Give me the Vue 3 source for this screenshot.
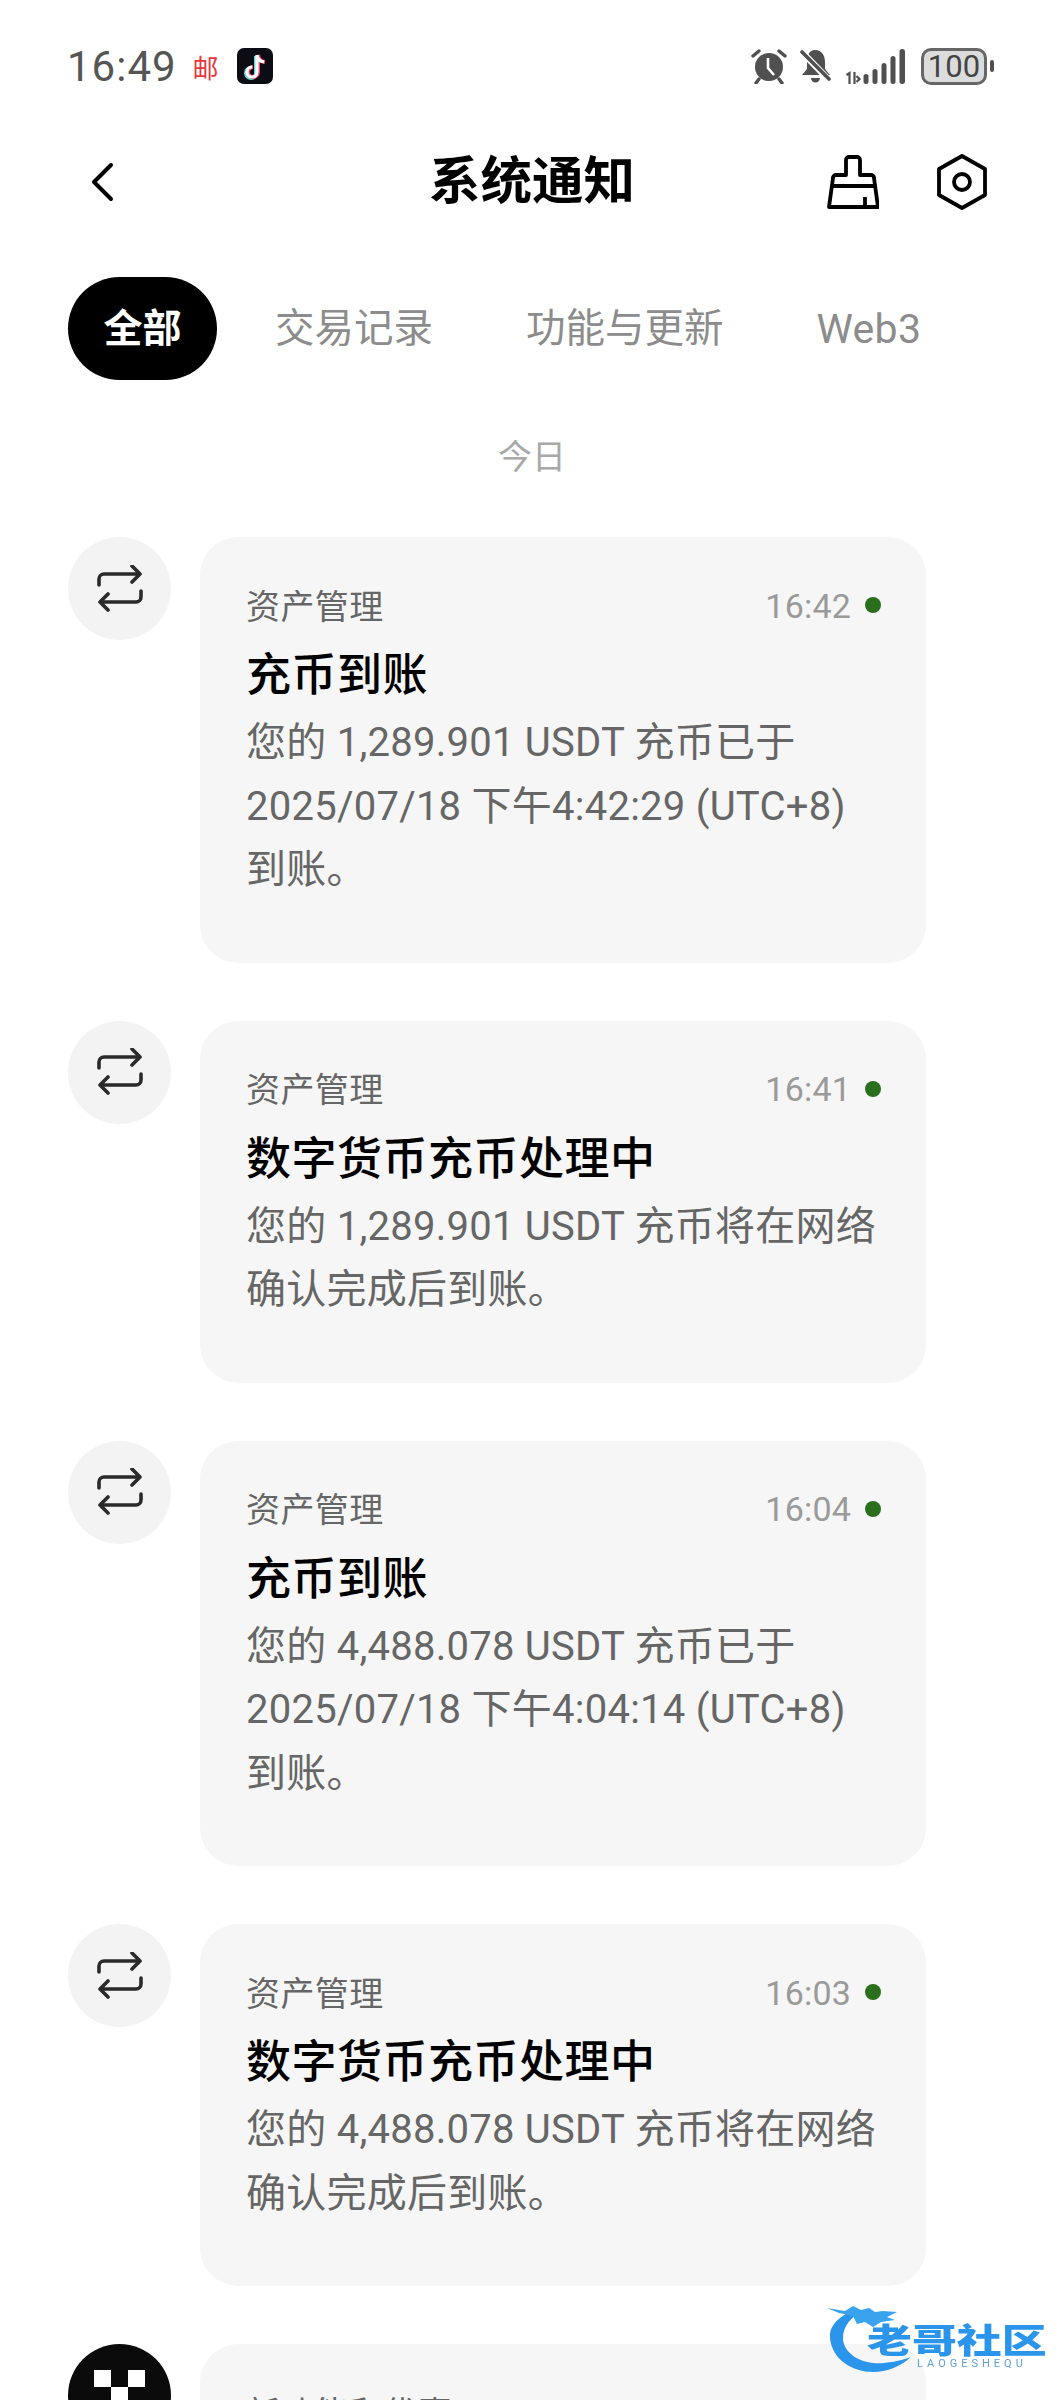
<template>
  <div class="screen">
    <!-- status bar -->
    <div class="status">
      <div class="status-left">
        <span class="clock">16:49</span>
        <span class="mail">邮</span>
        <svg class="tiktok" viewBox="0 0 36 36">
          <rect width="36" height="36" rx="7" fill="#0c0c14" />
          <path d="M20 7v17a5 5 0 1 1-5-5" fill="none" stroke="#5fd8dc" stroke-width="4" transform="translate(-1 1)" />
          <path d="M20 7v17a5 5 0 1 1-5-5M20 7c.5 4 3 6.500 7 7" fill="none" stroke="#f2456a" stroke-width="4" transform="translate(1 0)" />
          <path d="M20 7v17a5 5 0 1 1-5-5M20 7c.5 4 3 6.500 7 7" fill="none" stroke="#fff" stroke-width="3.200" />
        </svg>
      </div>
      <div class="status-right">
        <svg class="st-icon" viewBox="0 0 36 36">
          <circle cx="18" cy="19" r="14" fill="#505050" />
          <path d="M17 10v10l6 7" fill="none" stroke="#fff" stroke-width="2.600" />
          <path d="M2 8l6-5M34 8l-6-5M8 31l-3 4M28 31l3 4" stroke="#505050" stroke-width="3.400" stroke-linecap="round" />
        </svg>
        <svg class="st-icon bell" viewBox="0 0 32 36">
          <path d="M15 2c7 0 10 6 10 12v7l5 6H2l5-6v-7c0-6 2-12 8-12zM11 30h9a4.500 4.500 0 0 1-9 0z" fill="#505050" />
          <path d="M1 3l29 30" stroke="#fff" stroke-width="6.500" />
          <path d="M2 4l27 27" stroke="#505050" stroke-width="3.600" stroke-linecap="round" />
        </svg>
        <svg class="signal" viewBox="0 0 62 36">
          <path d="M2 27l3-2v11M10 24v12M12 28l3 3-3 3" fill="none" stroke="#505050" stroke-width="2.200" />
          <rect x="19" y="26" width="5" height="10" rx="2.500" fill="#505050" />
          <rect x="28" y="21" width="5" height="15" rx="2.500" fill="#505050" />
          <rect x="37" y="15" width="5" height="21" rx="2.500" fill="#505050" />
          <rect x="46" y="8" width="5" height="28" rx="2.500" fill="#505050" />
          <rect x="55" y="1" width="5.500" height="35" rx="2.700" fill="#505050" />
        </svg>
        <div class="battery"><span>100</span></div>
        <i class="battery-cap"></i>
      </div>
    </div>

    <!-- header -->
    <div class="topbar">
      <svg class="back" viewBox="0 0 24 40">
        <path d="M21 3L4 20l17 17" fill="none" stroke="#000" stroke-width="4" stroke-linecap="round" stroke-linejoin="round" />
      </svg>
      <h1>系统通知</h1>
      <svg class="broom" viewBox="0 0 52 54">
        <path d="M19 20V5a3 3 0 0 1 3-3h8a3 3 0 0 1 3 3v15h11a3 3 0 0 1 3 3l4 29H2l4-29a3 3 0 0 1 3-3z" fill="none" stroke="#000" stroke-width="3.800" stroke-linejoin="round" />
        <path d="M5 31h42M38 42v9" fill="none" stroke="#000" stroke-width="3.800" />
      </svg>
      <svg class="hex" viewBox="0 0 52 56">
        <path d="M26 2l23 13v26L26 54 3 41V15z" fill="none" stroke="#000" stroke-width="3.800" stroke-linejoin="round" />
        <circle cx="26" cy="28" r="8" fill="none" stroke="#000" stroke-width="3.800" />
      </svg>
    </div>

    <!-- tabs -->
    <div class="tabs">
      <span v-for="(t, i) in tabs" :key="t" class="tab" :class="{ on: i === 0 }">{{ t }}</span>
    </div>

    <div class="day">今日</div>

    <div class="list">
      <div v-for="n in notices" :key="n.time" class="row">
        <div class="avatar">
          <svg viewBox="0 0 48 48" width="48" height="48">
            <path d="M3 20v-6a5 5 0 0 1 5-5h36M36 1l8 8-8 8M45 26v6a5 5 0 0 1-5 5H4M12 29l-8 8 8 8" fill="none" stroke="#2a2a2a" stroke-width="3.600" stroke-linecap="round" stroke-linejoin="round" />
          </svg>
        </div>
        <div class="card">
          <div class="card-head">
            <span class="label">资产管理</span>
            <span class="time">{{ n.time }}</span>
            <i class="dot"></i>
          </div>
          <div class="title">{{ n.title }}</div>
          <p v-for="l in n.lines" :key="l" class="line">{{ l }}</p>
        </div>
      </div>

      <div class="row">
        <div class="avatar okx">
          <i></i><i></i><i></i><i></i><i></i>
        </div>
        <div class="card">
          <div class="card-head">
            <span class="label">新功能和优惠</span>
          </div>
        </div>
      </div>
    </div>

    <!-- watermark -->
    <div class="mark">
      <svg viewBox="0 0 100 80" width="100" height="80">
        <path d="M24 12C10 20 4 28 5 38c2 22 23 34 43 34 14 0 28-6 38-15-14 5-28 7-38 6-18-2-30-13-30-25 0-10 6-18 14-24z" fill="#2a95ea" />
        <path d="M2 8l18 3 8-5 8 4 8-2 6 4 8-1 14 1-10 5 8 3-14 2-8 5-8-5-8 2-4-8-14-3z" fill="#3aa3ee" />
      </svg>
      <div class="mark-name">老哥社区</div>
      <div class="mark-sub">LAOGESHEQU</div>
    </div>
  </div>
</template>

<script setup>
const tabs = ['全部', '交易记录', '功能与更新', 'Web3']

const notices = [
  {
    time: '16:42',
    title: '充币到账',
    lines: ['您的 1,289.901 USDT 充币已于', '2025/07/18 下午4:42:29 (UTC+8)', '到账。'],
  },
  {
    time: '16:41',
    title: '数字货币充币处理中',
    lines: ['您的 1,289.901 USDT 充币将在网络', '确认完成后到账。'],
  },
  {
    time: '16:04',
    title: '充币到账',
    lines: ['您的 4,488.078 USDT 充币已于', '2025/07/18 下午4:04:14 (UTC+8)', '到账。'],
  },
  {
    time: '16:03',
    title: '数字货币充币处理中',
    lines: ['您的 4,488.078 USDT 充币将在网络', '确认完成后到账。'],
  },
]
</script>

<style>
html, body {
  margin: 0;
  background: #fff;
}
</style>

<style scoped>
* {
  box-sizing: border-box;
}

.screen {
  position: relative;
  width: 1064px;
  height: 2400px;
  overflow: hidden;
  background: #fff;
  font-family: Roboto, "Noto Sans CJK SC", sans-serif;
}

.status {
  height: 132px;
  padding: 48px 70px 0 67px;
  display: flex;
  justify-content: space-between;
  align-items: flex-start;
}
.status-left, .status-right {
  display: flex;
  align-items: center;
  height: 36px;
}
.clock {
  font-size: 42px;
  color: #555;
  letter-spacing: 1px;
}
.mail {
  margin-left: 16px;
  font-size: 26px;
  color: #e8353c;
}
.tiktok {
  width: 36px;
  height: 36px;
  margin-left: 18px;
}
.st-icon {
  width: 36px;
  height: 36px;
  margin-right: 13px;
}
.bell {
  width: 32px;
  margin-right: 11px;
}
.signal {
  width: 65px;
  height: 36px;
  margin-right: 13px;
}
.battery {
  width: 66px;
  height: 37px;
  border: 3px solid #666;
  border-radius: 10px;
  background: #dcdcdc;
  display: flex;
  align-items: center;
  justify-content: center;
  font-size: 31px;
  color: #444;
}
.battery-cap {
  width: 4px;
  height: 12px;
  margin-left: 3px;
  border-radius: 2px;
  background: #505050;
}

.topbar {
  position: relative;
  height: 100px;
  display: flex;
  align-items: center;
  padding-left: 90px;
}
.back {
  width: 24px;
  height: 40px;
}
h1 {
  margin: 0 0 0 315px;
  font-size: 51.500px;
  line-height: 100px;
  font-weight: 700;
  color: #000;
}
.broom {
  width: 52px;
  height: 54px;
  margin-left: 192px;
}
.hex {
  width: 52px;
  height: 56px;
  margin-left: 57px;
}

.tabs {
  margin-top: 45px;
  padding-left: 68px;
  display: flex;
  align-items: center;
  height: 103px;
}
.tab {
  font-size: 39.500px;
  line-height: 100px;
  color: #8c8c8c;
  margin-right: 93px;
  white-space: nowrap;
}
.tab:last-child {
  font-size: 41px;
  letter-spacing: 0.300px;
}
.tab.on {
  width: 149px;
  height: 103px;
  margin-right: 58px;
  border-radius: 52px;
  background: #000;
  color: #fff;
  font-weight: 700;
  font-size: 39px;
  display: flex;
  align-items: center;
  justify-content: center;
}

.day {
  margin-top: 52px;
  text-align: center;
  font-size: 34px;
  line-height: 50px;
  color: #a8a8a8;
}

.list {
  margin-top: 55px;
  padding-left: 68px;
  display: flex;
  flex-direction: column;
  gap: 58px;
}
.row {
  display: flex;
  align-items: flex-start;
  gap: 29px;
}
.avatar {
  flex: none;
  width: 103px;
  height: 103px;
  border-radius: 50%;
  background: #f3f3f3;
  display: flex;
  align-items: center;
  justify-content: center;
}
.card {
  width: 726px;
  padding: 42px 45px 61px 46px;
  border-radius: 38px;
  background: #f6f6f6;
}
.card-head {
  height: 50px;
  display: flex;
  align-items: center;
}
.label {
  font-size: 34px;
  letter-spacing: 0.400px;
  color: #666;
  margin-right: auto;
}
.time {
  margin-top: 3px;
  font-size: 34px;
  letter-spacing: 0.200px;
  color: #9a9a9a;
}
.dot {
  width: 16px;
  height: 16px;
  margin: 2px 0 0 14px;
  border-radius: 50%;
  background: #2a6f1c;
}
.title {
  margin-top: 13px;
  margin-bottom: 1px;
  font-size: 45px;
  letter-spacing: 0.500px;
  line-height: 68px;
  color: #000;
  font-weight: 500;
}
.line {
  margin: 0;
  font-size: 40px;
  letter-spacing: 0.250px;
  line-height: 63.500px;
  color: #666;
  white-space: nowrap;
}

.okx {
  position: relative;
  background: #0b0b0b;
}
.okx i {
  position: absolute;
  width: 17px;
  height: 17px;
  background: #fff;
}
.okx i:nth-child(1) { left: 26px; top: 26px; }
.okx i:nth-child(2) { left: 60px; top: 26px; }
.okx i:nth-child(3) { left: 43px; top: 43px; }
.okx i:nth-child(4) { left: 26px; top: 60px; }
.okx i:nth-child(5) { left: 60px; top: 60px; }

.mark {
  position: absolute;
  left: 825px;
  top: 2300px;
  width: 239px;
  height: 100px;
  filter: blur(0.6px);
}
.mark svg {
  position: absolute;
  left: 0;
  top: 0;
}
.mark-name {
  position: absolute;
  left: 42px;
  top: 26px;
  font-size: 34px;
  line-height: 30px;
  font-weight: 900;
  color: #2a95ea;
  white-space: nowrap;
  transform: scaleX(1.32);
  transform-origin: left center;
}
.mark-sub {
  position: absolute;
  left: 92px;
  top: 58px;
  font-size: 11px;
  line-height: 12px;
  letter-spacing: 4px;
  color: #5f9fd0;
  white-space: nowrap;
}
</style>
